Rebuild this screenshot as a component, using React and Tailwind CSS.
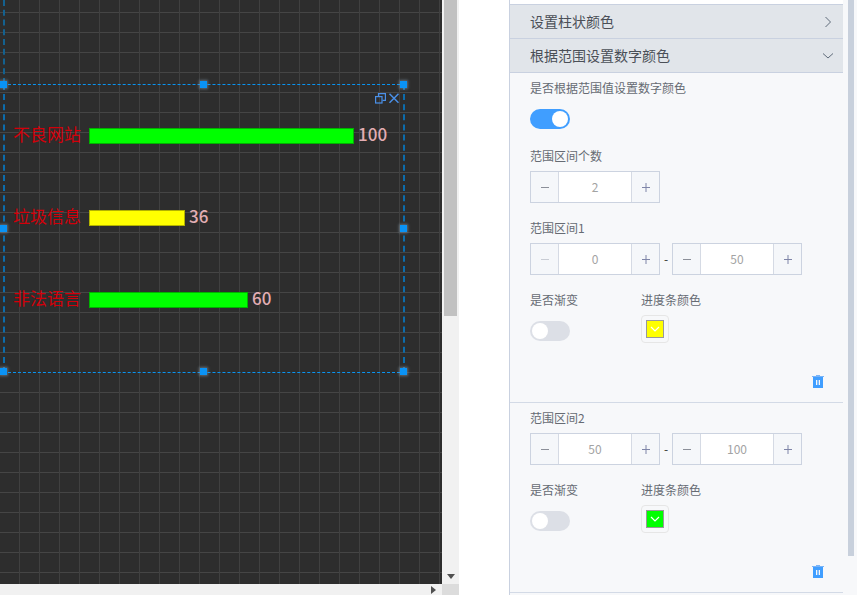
import React from "react";

const handles = [
  "left-0 top-[81px]",
  "left-[200px] top-[81px]",
  "left-[400px] top-[81px]",
  "left-0 top-[225px]",
  "left-[400px] top-[225px]",
  "left-0 top-[368px]",
  "left-[200px] top-[368px]",
  "left-[400px] top-[368px]",
];

const bars = [
  { label: "不良网站", value: 100, width: "w-[265px]", color: "bg-[#00ff00]", top: "top-[120px]" },
  { label: "垃圾信息", value: 36, width: "w-[96px]", color: "bg-[#ffff00]", top: "top-[202px]" },
  { label: "非法语言", value: 60, width: "w-[159px]", color: "bg-[#00ff00]", top: "top-[284px]" },
];

function Chevron({ dir }) {
  return (
    <svg width="12" height="12" viewBox="0 0 12 12" fill="none" stroke="#5f6b7a" strokeWidth="1">
      {dir === "right" ? <path d="M3.5 1 L8.5 6 L3.5 11" /> : <path d="M1 3.5 L6 8 L11 3.5" />}
    </svg>
  );
}

function Header({ title, dir }) {
  return (
    <div className="flex h-[34px] items-center justify-between border-b border-[#c9d1e0] bg-[#e1e5ea] pl-5 pr-[9px] text-sm text-[#4a4f57]">
      <span className="mb-0.5">{title}</span>
      <Chevron dir={dir} />
    </div>
  );
}

function Label({ children, className = "" }) {
  return <div className={`h-5 text-xs leading-5 text-[#666b73] ${className}`}>{children}</div>;
}

function Toggle({ on }) {
  return (
    <div className={`flex h-5 w-10 items-center rounded-full px-0.5 ${on ? "justify-end bg-[#409eff]" : "bg-[#dcdfe6]"}`}>
      <div className="h-4 w-4 rounded-full bg-white" />
    </div>
  );
}

function StepButton({ type, disabled, className = "" }) {
  const stroke = disabled ? "#c8ccd4" : type === "plus" ? "#7f85a8" : "#8b8f99";
  return (
    <div className={`flex w-[28px] items-center justify-center ${className}`}>
      <svg width="10" height="10" viewBox="0 0 10 10" stroke={stroke} strokeWidth="1">
        <path d="M1 5.5 H9" />
        {type === "plus" && <path d="M5 1 V10" />}
      </svg>
    </div>
  );
}

function Stepper({ value, minDisabled }) {
  return (
    <div className="flex h-8 w-[130px] border border-[#ccd3e0] bg-[#f5f7fa]">
      <StepButton type="minus" disabled={minDisabled} className="border-r border-[#d5dae4]" />
      <div className="flex-1 bg-white text-center text-xs leading-[30px] text-[#a3a3a3]">{value}</div>
      <StepButton type="plus" className="border-l border-[#d5dae4]" />
    </div>
  );
}

function Swatch({ color }) {
  return (
    <div className="flex h-7 w-7 items-center justify-center rounded border border-[#e6e6e6]">
      <div className={`flex h-[18px] w-[18px] items-center justify-center border border-[#999999] ${color}`}>
        <svg width="10" height="10" viewBox="0 0 10 10" fill="none" stroke="#ffffff" strokeWidth="1.2">
          <path d="M1 3 L5 7 L9 3" />
        </svg>
      </div>
    </div>
  );
}

function Trash() {
  return (
    <svg width="12" height="13" viewBox="0 0 12 13">
      <path d="M4 0 H8 V1 H12 V2 H0 V1 H4 Z" fill="#79b4f8" />
      <path fillRule="evenodd" d="M1 2 H11 V13 H1 Z M4 5 V10 H5.3 V5 Z M6.7 5 V10 H8 V5 Z" fill="#409eff" />
    </svg>
  );
}

function RangeBlock({ title, from, to, minDisabled, color, className = "" }) {
  return (
    <div className={`border-b border-[#d3dae6] ${className}`}>
      <div className="pl-5">
        <Label className="mb-[5px]">{title}</Label>
        <div className="flex items-center">
          <Stepper value={from} minDisabled={minDisabled} />
          <span className="w-3 text-center text-xs leading-none text-[#333333]">-</span>
          <Stepper value={to} />
        </div>
        <div className="mt-[15px] flex">
          <div className="w-[111px]">
            <Label className="mb-[11px]">是否渐变</Label>
            <Toggle />
          </div>
          <div>
            <Label className="mb-[5px]">进度条颜色</Label>
            <Swatch color={color} />
          </div>
        </div>
      </div>
      <div className="mt-8 flex h-[27px] justify-end pr-[19px]">
        <Trash />
      </div>
    </div>
  );
}

export default function App() {
  return (
    <div className="flex h-[595px] w-[857px] overflow-hidden bg-white font-['Noto_Sans_CJK_SC','Noto_Sans',sans-serif]">
      {/* Canvas with native looking scrollbars */}
      <div className="flex w-[459px] shrink-0 flex-col">
        <div className="flex h-[584px]">
          <div className="relative w-[442px] bg-[#2d2d2d] bg-[linear-gradient(to_right,transparent_19px,#404040_19px,#404040_20px,transparent_20px),linear-gradient(to_bottom,transparent_12px,#454545_12px,#454545_13px,transparent_13px)] bg-[size:20px_20px]">
            <div className="absolute left-[3px] top-0 h-[84px] border-l-2 border-dashed border-[#14618f]" />
            <div className="absolute left-[3px] top-[372px] h-px w-[402px] bg-[#2d2d2d]" />
            <div className="absolute left-[3px] top-[84px] h-[289px] w-[402px] border-x-2 border-y border-dashed border-x-[#0d6cab] border-y-[#0a94f0]" />
            {handles.map((pos) => (
              <div key={pos} className={`absolute h-[7px] w-[7px] bg-[#0a93f5] shadow-[0_0_3px_1px_rgba(140,160,180,0.55)] ${pos}`} />
            ))}
            <svg className="absolute left-[375px] top-[93px]" width="24" height="11" viewBox="0 0 24 11" fill="none" stroke="#4a90e8" strokeWidth="1.2">
              <path d="M3.5 3 V0.6 H10.4 V7.4 H7.5" />
              <rect x="0.6" y="3.6" width="6.4" height="6.4" />
              <path d="M14.5 0.8 L23.5 9.8 M23.5 0.8 L14.5 9.8" strokeWidth="1.5" />
            </svg>
            {bars.map((bar) => (
              <div key={bar.label} className={`absolute left-[13px] flex h-8 items-center ${bar.top}`}>
                <span className="mb-1 w-[76px] text-[17px] text-[#d3000a]">{bar.label}</span>
                <div className={`h-4 border border-black/30 ${bar.width} ${bar.color}`} />
                <span className="mb-1 ml-1 text-[17px] font-medium text-[#e3adb3]">{bar.value}</span>
              </div>
            ))}
          </div>
          <div className="flex w-[17px] flex-col items-center justify-between bg-[#f1f1f1]">
            <div className="h-[316px] w-[13px] bg-[#c1c1c1]" />
            <svg className="mb-[5px]" width="8" height="5" viewBox="0 0 8 5">
              <path d="M0 0 H8 L4 5 Z" fill="#505050" />
            </svg>
          </div>
        </div>
        <div className="flex h-[11px]">
          <div className="flex w-[442px] items-center justify-end bg-[#f1f1f1] pr-[6px]">
            <svg width="5" height="8" viewBox="0 0 5 8">
              <path d="M0 0 V8 L5 4 Z" fill="#505050" />
            </svg>
          </div>
          <div className="w-[17px] bg-[#dcdcdc]" />
        </div>
      </div>

      <div className="w-[50px] shrink-0" />

      {/* Settings panel */}
      <div className="flex w-[348px] shrink-0 border-l border-[#c9d1e0] bg-[#f7f8fa]">
        <div className="w-[333px] shrink-0">
          <div className="h-1 bg-white" />
          <div className="border-t border-[#c9d1e0]">
            <Header title="设置柱状颜色" dir="right" />
            <Header title="根据范围设置数字颜色" dir="down" />
          </div>
          <div className="pl-5 pt-[5px]">
            <Label className="mb-[11px]">是否根据范围值设置数字颜色</Label>
            <Toggle on />
            <Label className="mb-[5px] mt-[17px]">范围区间个数</Label>
            <Stepper value="2" />
          </div>
          <RangeBlock title="范围区间1" from="0" to="50" minDisabled color="bg-[#ffff00]" className="mt-[15px]" />
          <RangeBlock title="范围区间2" from="50" to="100" color="bg-[#00ff00]" className="pt-[5px]" />
        </div>
        <div className="w-[5px] shrink-0" />
        <div className="h-[556px] w-[6px] shrink-0 bg-[#c8d0dc]" />
      </div>
    </div>
  );
}
